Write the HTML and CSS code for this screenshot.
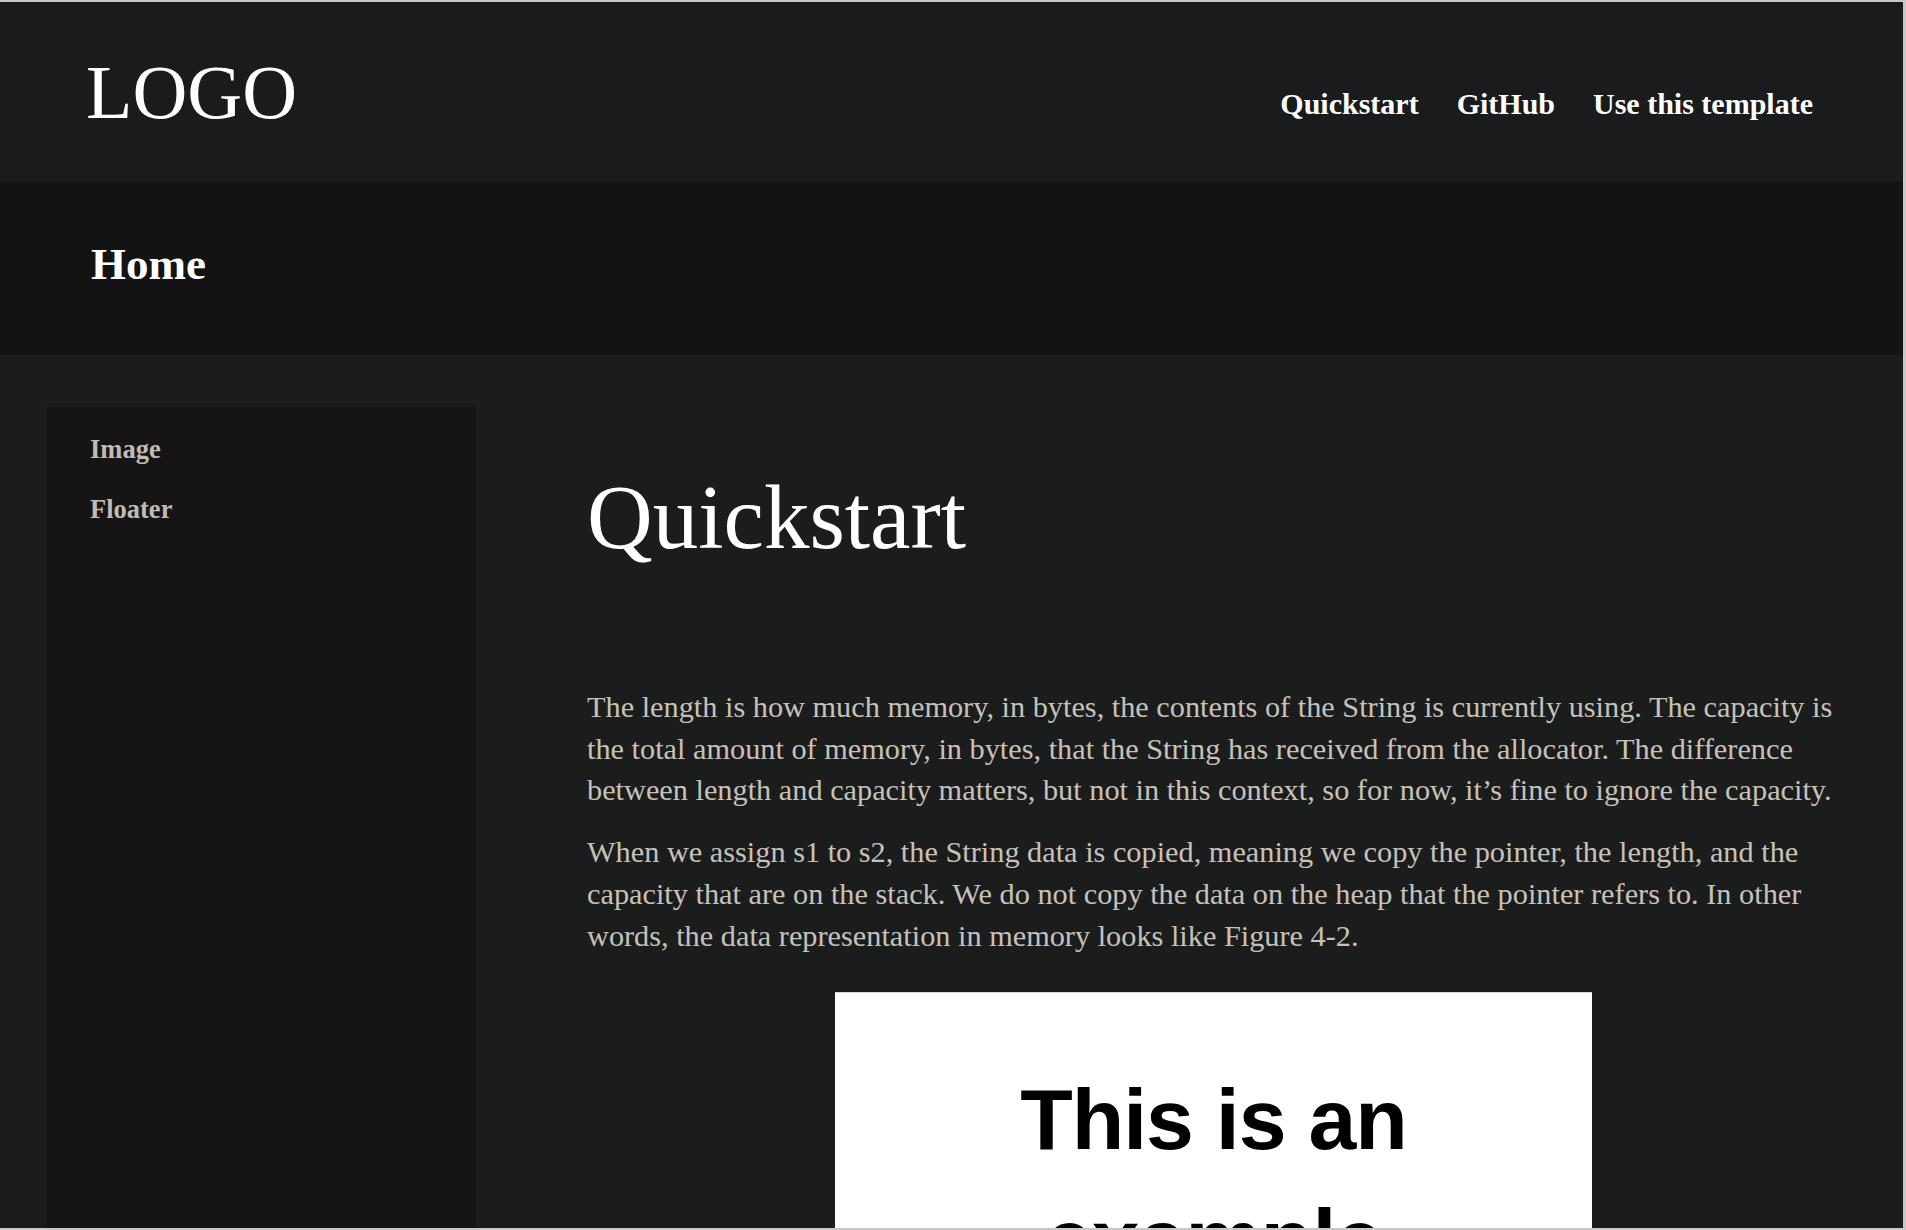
FILE: index.html
```html
<!DOCTYPE html>
<html lang="en">
<head>
<meta charset="utf-8">
<title>Quickstart</title>
<link rel="stylesheet" href="styles.css">
</head>
<body>
<div class="frame">
  <header class="topbar">
    <a class="logo" href="#">LOGO</a>
    <nav class="topnav">
      <a href="#">Quickstart</a>
      <a href="#">GitHub</a>
      <a href="#">Use this template</a>
    </nav>
  </header>
  <div class="crumbbar">
    <h2 class="crumb">Home</h2>
  </div>
  <div class="main">
    <aside class="sidebar">
      <a class="side-link" href="#">Image</a>
      <a class="side-link" href="#">Floater</a>
    </aside>
    <article class="content">
      <h1 class="title">Quickstart</h1>
      <p class="para">The length is how much memory, in bytes, the contents of the String is currently using. The capacity is the total amount of memory, in bytes, that the String has received from the allocator. The difference between length and capacity matters, but not in this context, so for now, it’s fine to ignore the capacity.</p>
      <p class="para">When we assign s1 to s2, the String data is copied, meaning we copy the pointer, the length, and the capacity that are on the stack. We do not copy the data on the heap that the pointer refers to. In other words, the data representation in memory looks like Figure 4-2.</p>
      <figure class="figure">
        <div class="figure-img">
          <span class="figure-line">This is an</span>
          <span class="figure-line">example</span>
          <span class="figure-line">image</span>
        </div>
      </figure>
    </article>
  </div>
</div>
</body>
</html>
```

FILE: styles.css
```css
* {
  box-sizing: border-box;
}

html, body {
  margin: 0;
  padding: 0;
  background: #1b1c1c;
}

body {
  font-family: "Liberation Serif", "Times New Roman", serif;
  color: #c9c5bd;
}

a {
  text-decoration: none;
  color: inherit;
}

.frame {
  height: 1230px;
  overflow: hidden;
  display: flex;
  flex-direction: column;
  border-top: 2px solid #c8c8c8;
  border-right: 3px solid #c8c8c8;
  border-bottom: 2px solid #c8c8c8;
  background: #1b1c1c;
}

/* ---------- header ---------- */
.topbar {
  flex: 0 0 180px;
  display: flex;
  justify-content: space-between;
  align-items: flex-start;
  padding: 0 90px 0 86px;
  background: #1a1b1c;
}

.logo {
  margin-top: 47px;
  font-size: 76px;
  line-height: normal;
  color: #ffffff;
}

.topnav {
  margin-top: 85px;
  display: flex;
  gap: 38px;
  font-size: 30px;
  font-weight: bold;
  line-height: normal;
}

.topnav a {
  color: #ffffff;
}

/* ---------- breadcrumb band ---------- */
.crumbbar {
  flex: 0 0 173px;
  padding: 56px 0 0 91px;
  background: #131314;
}

.crumb {
  margin: 0;
  font-size: 45px;
  font-weight: bold;
  line-height: normal;
  color: #ffffff;
}

/* ---------- main ---------- */
.main {
  flex: 1 1 auto;
  display: grid;
  grid-template-columns: 430px 1253px;
  column-gap: 111px;
  padding: 52px 0 0 46px;
  background: #1b1c1c;
  min-height: 0;
}

.sidebar {
  display: flex;
  flex-direction: column;
  gap: 30px;
  padding: 27px 0 0 44px;
  background: #151516;
  min-height: 1000px;
}

.side-link {
  font-size: 26.5px;
  font-weight: bold;
  line-height: 30px;
  color: #c0bcb4;
}

.content {
  padding-top: 58px;
}

.title {
  margin: 0 0 117px 0;
  font-size: 91px;
  font-weight: normal;
  line-height: normal;
  color: #ffffff;
}

.para {
  margin: 0 0 20px 0;
  font-size: 30.3px;
  line-height: 41.7px;
  color: #c6c2ba;
}

.figure {
  margin: 35px 0 0 0;
  display: flex;
  justify-content: center;
}

.figure-img {
  width: 757px;
  height: 560px;
  background: #ffffff;
  border-top: 1px solid #d6d6d6;
  display: flex;
  flex-direction: column;
  align-items: center;
  padding-top: 66px;
  font-family: "Liberation Sans", Arial, sans-serif;
  font-weight: bold;
  font-size: 86px;
  line-height: 120px;
  letter-spacing: -1px;
  color: #000000;
}
```
